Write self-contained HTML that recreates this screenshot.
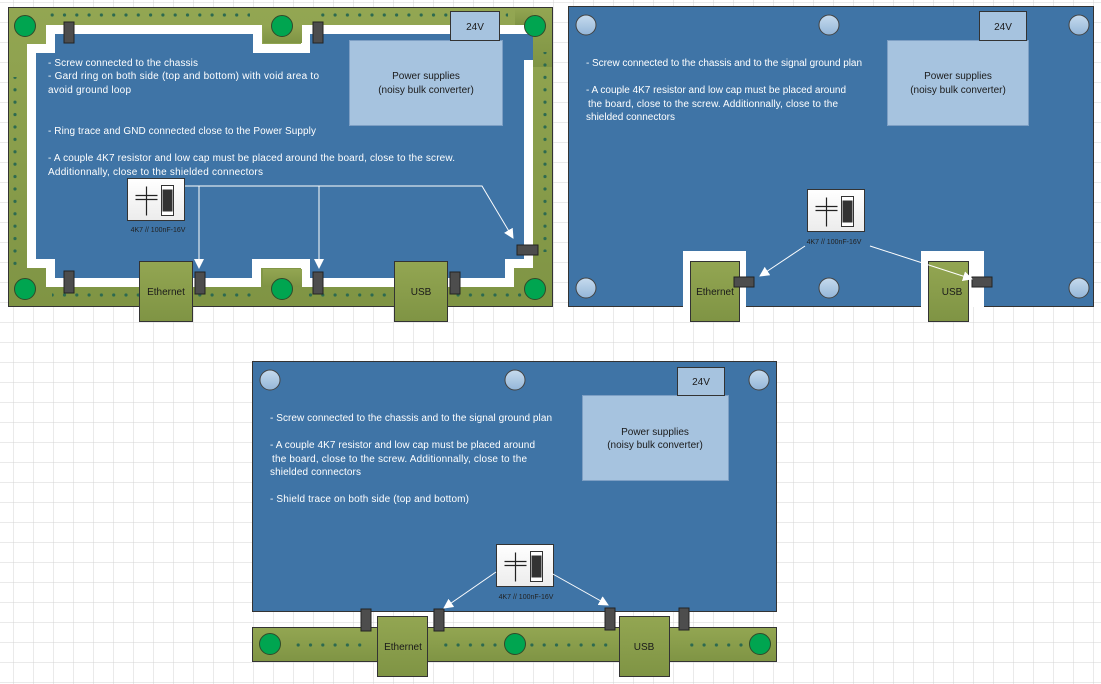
<!DOCTYPE html>
<html><head><meta charset="utf-8"><style>
html,body{margin:0;padding:0;width:1101px;height:684px;overflow:hidden;background:#fff;}
svg{display:block}
text{font-family:"Liberation Sans",sans-serif;}
.t{fill:#fff;font-size:10px}
.d{fill:#1a1a1a;font-size:10px}
.s{fill:#222;font-size:7px}
</style></head><body>
<svg width="1101" height="684" viewBox="0 0 1101 684" xmlns="http://www.w3.org/2000/svg">
<defs>
<pattern id="grid" x="13" y="2" width="20" height="20" patternUnits="userSpaceOnUse">
<path d="M0 0H20M0 0V20" stroke="#d4d4d4" stroke-width="1" fill="none"/>
</pattern>
<pattern id="dh" x="0" y="0" width="12.3" height="10" patternUnits="userSpaceOnUse">
<circle cx="3" cy="5" r="1.6" fill="#2d6a4f"/>
</pattern>
<pattern id="dv" x="0" y="0" width="10" height="12.4" patternUnits="userSpaceOnUse">
<circle cx="5" cy="3" r="1.6" fill="#2d6a4f"/>
</pattern>
<linearGradient id="ol" x1="0" y1="0" x2="0" y2="1"><stop offset="0" stop-color="#93a652"/><stop offset="1" stop-color="#7f9444"/></linearGradient>
<linearGradient id="sc" x1="0" y1="0" x2="0" y2="1"><stop offset="0" stop-color="#c6dbee"/><stop offset="1" stop-color="#94b6d8"/></linearGradient>
<linearGradient id="wb" x1="0" y1="0" x2="0" y2="1"><stop offset="0" stop-color="#ffffff"/><stop offset="1" stop-color="#ececec"/></linearGradient>
<g id="cap">
<rect x="0" y="0" width="57" height="42" fill="url(#wb)" stroke="#333" stroke-width="1"/>
<path d="M19 8V37M8 17H30M8 21H30" stroke="#222" stroke-width="1.2" fill="none"/>
<rect x="34" y="7" width="12" height="30" fill="#fff" stroke="#333" stroke-width="1"/>
<rect x="35" y="11" width="10" height="22" fill="#333"/>
</g>
<g id="gc"><circle r="10.5" fill="#00a550" stroke="#2f4a2a" stroke-width="1"/></g>
<g id="bc"><circle r="10" fill="url(#sc)" stroke="#444" stroke-width="1"/></g>
<marker id="ar" markerWidth="10" markerHeight="10" refX="9" refY="5" orient="auto" markerUnits="userSpaceOnUse">
<path d="M0 0L10 5L0 10Z" fill="#fff"/>
</marker>
</defs>
<rect width="1101" height="684" fill="url(#grid)"/>

<!-- PANEL 1 -->
<rect x="8.5" y="7.5" width="544" height="299" fill="url(#ol)" stroke="#333"/>
<polygon points="36,53 55,53 55,34 253,34 253,53 310,53 310,34 524,34 524,259 505,259 505,278 310,278 310,259 252,259 252,278 55,278 55,259 36,259" fill="#fff" stroke="#fff" stroke-width="18" stroke-linejoin="miter"/>
<polygon points="263,25 302,25 302,43 263,43" fill="url(#ol)"/>
<polygon points="263,269 302,269 302,287 263,287" fill="url(#ol)"/>
<polygon points="533,25 552,25 552,60 533,60" fill="url(#ol)"/>
<polygon points="36,53 55,53 55,34 253,34 253,53 310,53 310,34 533,34 533,60 524,60 524,259 505,259 505,278 310,278 310,259 252,259 252,278 55,278 55,259 36,259" fill="#3f74a6"/>
<rect x="533" y="7" width="19" height="60" fill="url(#ol)"/>
<rect x="515" y="8" width="18" height="17" fill="url(#ol)"/>
<rect x="8.5" y="7.5" width="544" height="299" fill="none" stroke="#333"/>
<rect x="50" y="10" width="200" height="10" fill="url(#dh)"/>
<rect x="320" y="10" width="188" height="10" fill="url(#dh)"/>
<rect x="12" y="77" width="10" height="190" fill="url(#dv)"/>
<rect x="538" y="52" width="10" height="200" fill="url(#dv)"/>
<rect x="52" y="291" width="200" height="10" fill="url(#dh)"/>
<rect x="308" y="291" width="215" height="10" fill="url(#dh)"/>
<use href="#gc" x="25" y="26"/><use href="#gc" x="282" y="26"/><use href="#gc" x="535" y="26"/>
<use href="#gc" x="25" y="289"/><use href="#gc" x="282" y="289"/><use href="#gc" x="535" y="289"/>
<rect x="64" y="22" width="10" height="21" fill="#4d4d4d" stroke="#222"/>
<rect x="313" y="22" width="10" height="21" fill="#4d4d4d" stroke="#222"/>
<rect x="517" y="245" width="21" height="10" fill="#4d4d4d" stroke="#222"/>
<rect x="64" y="271" width="10" height="22" fill="#4d4d4d" stroke="#222"/>
<rect x="195" y="272" width="10" height="22" fill="#4d4d4d" stroke="#222"/>
<rect x="313" y="272" width="10" height="22" fill="#4d4d4d" stroke="#222"/>
<rect x="450" y="272" width="10" height="22" fill="#4d4d4d" stroke="#222"/>
<rect x="139.5" y="261.5" width="53" height="60" fill="url(#ol)" stroke="#333"/>
<text class="d" x="166" y="295" text-anchor="middle">Ethernet</text>
<rect x="394.5" y="261.5" width="53" height="60" fill="url(#ol)" stroke="#333"/>
<text class="d" x="421" y="295" text-anchor="middle">USB</text>
<rect x="349.5" y="40.5" width="153" height="85" fill="#a6c3df" stroke="#7d9fc4"/>
<text class="d" x="426" y="79" text-anchor="middle">Power supplies</text>
<text class="d" x="426" y="93" text-anchor="middle">(noisy bulk converter)</text>
<rect x="450.5" y="11.5" width="49" height="29" fill="#a6c3df" stroke="#333"/>
<text class="d" x="475" y="30" text-anchor="middle">24V</text>
<text class="t" x="48" y="66" textLength="150">- Screw connected to the chassis</text>
<text class="t" x="48" y="79" textLength="271">- Gard ring on both side (top and bottom) with void area to</text>
<text class="t" x="48" y="93" textLength="83">avoid ground loop</text>
<text class="t" x="48" y="134" textLength="268">- Ring trace and GND connected close to the Power Supply</text>
<text class="t" x="48" y="161" textLength="407">- A couple 4K7 resistor and low cap must be placed around the board, close to the screw.</text>
<text class="t" x="48" y="175" textLength="215">Additionnally, close to the shielded connectors</text>
<use href="#cap" x="127.5" y="178.5"/>
<text class="s" x="158" y="232" text-anchor="middle">4K7 // 100nF-16V</text>
<path d="M185 186H482L513 238" stroke="#fff" stroke-width="1" fill="none" marker-end="url(#ar)"/>
<path d="M199 186V268" stroke="#fff" stroke-width="1" marker-end="url(#ar)"/>
<path d="M319 186V268" stroke="#fff" stroke-width="1" marker-end="url(#ar)"/>

<!-- PANEL 2 -->
<rect x="568.5" y="6.5" width="525" height="300" fill="#3f74a6" stroke="#333"/>
<rect x="683" y="251" width="63" height="56" fill="#fff"/>
<rect x="921" y="251" width="63" height="56" fill="#fff"/>
<use href="#bc" x="586" y="25"/><use href="#bc" x="829" y="25"/><use href="#bc" x="1079" y="25"/>
<use href="#bc" x="586" y="288"/><use href="#bc" x="829" y="288"/><use href="#bc" x="1079" y="288"/>
<rect x="690.5" y="261.5" width="49" height="60" fill="url(#ol)" stroke="#333"/>
<text class="d" x="715" y="295" text-anchor="middle">Ethernet</text>
<rect x="928.5" y="261.5" width="40" height="60" fill="url(#ol)" stroke="#333"/>
<text class="d" x="952" y="295" text-anchor="middle">USB</text>
<rect x="734" y="277" width="20" height="10" fill="#4d4d4d" stroke="#222"/>
<rect x="972" y="277" width="20" height="10" fill="#4d4d4d" stroke="#222"/>
<rect x="887.5" y="40.5" width="141" height="85" fill="#a6c3df" stroke="#7d9fc4"/>
<text class="d" x="958" y="79" text-anchor="middle">Power supplies</text>
<text class="d" x="958" y="93" text-anchor="middle">(noisy bulk converter)</text>
<rect x="979.5" y="11.5" width="47" height="29" fill="#a6c3df" stroke="#333"/>
<text class="d" x="1003" y="30" text-anchor="middle">24V</text>
<text class="t" x="586" y="66" textLength="276">- Screw connected to the chassis and to the signal ground plan</text>
<text class="t" x="586" y="93" textLength="260">- A couple 4K7 resistor and low cap must be placed around</text>
<text class="t" x="588" y="107" textLength="250">the board, close to the screw. Additionnally, close to the</text>
<text class="t" x="586" y="120" textLength="89">shielded connectors</text>
<use href="#cap" x="807.5" y="189.5"/>
<text class="s" x="834" y="244" text-anchor="middle">4K7 // 100nF-16V</text>
<path d="M805 246L760 276" stroke="#fff" stroke-width="1" fill="none" marker-end="url(#ar)"/>
<path d="M870 246L972 279" stroke="#fff" stroke-width="1" fill="none" marker-end="url(#ar)"/>

<!-- PANEL 3 -->
<rect x="252.5" y="361.5" width="524" height="250" fill="#3f74a6" stroke="#333"/>
<use href="#bc" x="270" y="380"/><use href="#bc" x="515" y="380"/><use href="#bc" x="759" y="380"/>
<rect x="582.5" y="395.5" width="146" height="85" fill="#a6c3df" stroke="#7d9fc4"/>
<text class="d" x="655" y="435" text-anchor="middle">Power supplies</text>
<text class="d" x="655" y="448" text-anchor="middle">(noisy bulk converter)</text>
<rect x="677.5" y="367.5" width="47" height="28" fill="#a6c3df" stroke="#333"/>
<text class="d" x="701" y="385" text-anchor="middle">24V</text>
<text class="t" x="270" y="421" textLength="282">- Screw connected to the chassis and to the signal ground plan</text>
<text class="t" x="270" y="448" textLength="265">- A couple 4K7 resistor and low cap must be placed around</text>
<text class="t" x="272" y="462" textLength="255">the board, close to the screw. Additionnally, close to the</text>
<text class="t" x="270" y="475" textLength="91">shielded connectors</text>
<text class="t" x="270" y="502" textLength="199">- Shield trace on both side (top and bottom)</text>
<use href="#cap" x="496.5" y="544.5"/>
<text class="s" x="526" y="599" text-anchor="middle">4K7 // 100nF-16V</text>
<path d="M496 572L444 608" stroke="#fff" stroke-width="1" fill="none" marker-end="url(#ar)"/>
<path d="M551 573L608 605" stroke="#fff" stroke-width="1" fill="none" marker-end="url(#ar)"/>
<rect x="252.5" y="627.5" width="524" height="34" fill="url(#ol)" stroke="#333"/>
<rect x="292" y="639" width="70" height="10" fill="url(#dh)"/>
<rect x="438" y="639" width="70" height="10" fill="url(#dh)"/>
<rect x="526" y="639" width="90" height="10" fill="url(#dh)"/>
<rect x="685" y="639" width="60" height="10" fill="url(#dh)"/>
<use href="#gc" x="270" y="644"/><use href="#gc" x="515" y="644"/><use href="#gc" x="760" y="644"/>
<rect x="361" y="609" width="10" height="22" fill="#4d4d4d" stroke="#222"/>
<rect x="434" y="609" width="10" height="22" fill="#4d4d4d" stroke="#222"/>
<rect x="605" y="608" width="10" height="22" fill="#4d4d4d" stroke="#222"/>
<rect x="679" y="608" width="10" height="22" fill="#4d4d4d" stroke="#222"/>
<rect x="377.5" y="616.5" width="50" height="60" fill="url(#ol)" stroke="#333"/>
<text class="d" x="403" y="650" text-anchor="middle">Ethernet</text>
<rect x="619.5" y="616.5" width="50" height="60" fill="url(#ol)" stroke="#333"/>
<text class="d" x="644" y="650" text-anchor="middle">USB</text>
</svg>
</body></html>
